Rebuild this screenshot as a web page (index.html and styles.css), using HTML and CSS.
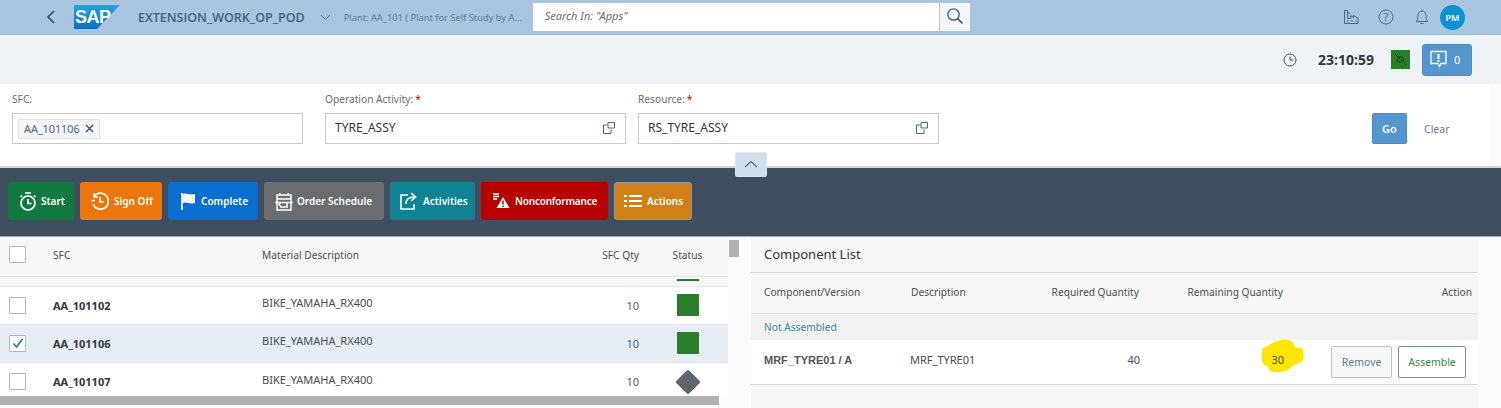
FILE: index.html
```html
<!DOCTYPE html>
<html lang="en">
  <head>
    <meta charset="UTF-8" />
    <title>EXTENSION_WORK_OP_POD</title>
    <link rel="stylesheet" href="styles.css">
  </head>
  <body>
    <header class="shell-bar">
      <svg class="back-icon" width="10" height="14" viewBox="0 0 10 14"><path d="M8 1L2 7l6 6" fill="none" stroke="#34506e" stroke-width="1.7"/></svg>
      <svg class="sap-logo" width="46" height="24" viewBox="0 0 46 24">
        <defs>
          <linearGradient id="sapBlue" x1="0" y1="0" x2="0" y2="1">
            <stop offset="0" stop-color="#1fa5e6"/>
            <stop offset="1" stop-color="#0a6fc0"/>
          </linearGradient>
        </defs>
        <polygon points="0,0 46,0 23,24 0,24" fill="url(#sapBlue)"/>
        <text x="1" y="18" class="sap-text">SAP</text>
      </svg>
      <span class="app-title">EXTENSION_WORK_OP_POD</span>
      <svg class="title-caret" width="11" height="7" viewBox="0 0 11 7"><path d="M1 1l4.5 4.5L10 1" fill="none" stroke="#5a7691" stroke-width="1"/></svg>
      <span class="plant">Plant: AA_101 ( Plant for Self Study by A...</span>
      <div class="search">
        <div class="search-input">Search In: "Apps"</div>
        <button class="search-btn">
          <svg width="18" height="18" viewBox="0 0 18 18"><circle cx="7.5" cy="7.5" r="5.7" fill="none" stroke="#2f5d86" stroke-width="1.3"/><path d="M11.7 11.7L16.5 16.5" stroke="#2f5d86" stroke-width="1.7"/></svg>
        </button>
      </div>
      <div class="shell-icons">
        <svg class="icon-plant" width="16" height="14" viewBox="0 0 16 14" fill="none" stroke="#4d6a86" stroke-width="1"><path d="M1.5 .5h3v8h3V5.5l3 2V5.5l4.5 2.500v5.5H1.5zM4.500 3H7M4 11h2M8 11h2M12 11h1.5"/></svg>
        <svg class="icon-help" width="16" height="16" viewBox="0 0 16 16"><circle cx="8" cy="8" r="7" fill="none" stroke="#4d6a86" stroke-width="1"/><text x="8" y="12" class="help-text">?</text></svg>
        <svg class="icon-bell" width="14" height="16" viewBox="0 0 14 16" fill="none" stroke="#4d6a86" stroke-width="1"><path d="M1 12.5c1.5-1 1.800-2.500 1.800-5C2.800 4 4.500 2 7 2s4.200 2 4.200 5.500c0 2.500.3 4 1.800 5zM7 .5V2M5.500 14.500h3"/></svg>
        <div class="avatar">PM</div>
      </div>
    </header>

    <div class="status-bar">
      <svg class="clock" width="14" height="14" viewBox="0 0 14 14" fill="none" stroke="#3d4a56" stroke-width="1"><circle cx="7" cy="7" r="6"/><path d="M7 3.5V7h3.5"/></svg>
      <span class="time">23:10:59</span>
      <div class="conn-status">
        <svg width="13" height="13" viewBox="0 0 13 13" fill="none" stroke="#1d3d1d" stroke-width="1"><circle cx="6.5" cy="6.5" r="3"/><path d="M1 1l11 11"/></svg>
      </div>
      <button class="msg-btn">
        <svg width="19" height="19" viewBox="0 0 19 19"><path d="M2 1.5h15v12h-5l-1.5 3-1.5-3H2z" fill="none" stroke="#fff" stroke-width="1.3"/><path d="M9.5 4v5M9.5 10v1.800" stroke="#fff" stroke-width="2"/></svg>
        <span>0</span>
      </button>
    </div>

    <section class="filter-bar">
      <div class="field field-sfc">
        <label>SFC:</label>
        <div class="input">
          <span class="token">AA_101106 <svg width="9" height="9" viewBox="0 0 9 9"><path d="M1 1l7 7M8 1L1 8" stroke="#34506e" stroke-width="1.4"/></svg></span>
        </div>
      </div>
      <div class="field field-op">
        <label>Operation Activity:<b>*</b></label>
        <div class="input input-text">
          TYRE_ASSY
          <svg class="vh-icon" width="12" height="12" viewBox="0 0 12 12" fill="none" stroke="#3f6c96" stroke-width="1"><path d="M4.5 3H.5v8.5H8V7.5M5 .5h6.5V6H5z"/></svg>
        </div>
      </div>
      <div class="field field-res">
        <label>Resource:<b>*</b></label>
        <div class="input input-text">
          RS_TYRE_ASSY
          <svg class="vh-icon" width="12" height="12" viewBox="0 0 12 12" fill="none" stroke="#3f6c96" stroke-width="1"><path d="M4.5 3H.5v8.5H8V7.5M5 .5h6.5V6H5z"/></svg>
        </div>
      </div>
      <button class="go-btn">Go</button>
      <button class="clear-btn">Clear</button>
      <button class="collapse-btn">
        <svg width="14" height="8" viewBox="0 0 14 8"><path d="M1 7l6-5.5L13 7" fill="none" stroke="#3f6c96" stroke-width="1.1"/></svg>
      </button>
    </section>

    <nav class="toolbar">
      <button class="action action-start">
        <svg width="18" height="19" viewBox="0 0 18 19" fill="none" stroke="#fff" stroke-width="1.7"><circle cx="9" cy="11" r="7"/><path d="M9 7v4.5h3.5M6 1h6M3 3.500l-1.5 1.500M15 3.500l1.5 1.500"/></svg>
        Start
      </button>
      <button class="action action-signoff">
        <svg width="19" height="18" viewBox="0 0 19 18" fill="none" stroke="#fff" stroke-width="1.7"><path d="M4 4.5A8 8 0 1 1 3 12M1.5 8.5h3.5M4 1v4h4M10 5v5h3.5"/></svg>
        Sign Off
      </button>
      <button class="action action-complete">
        <svg width="16" height="19" viewBox="0 0 16 19"><path d="M2 1v17" stroke="#fff" stroke-width="1.7"/><path d="M3 2c4-1.5 6 1.5 12 0v9c-5 1.5-8-1.5-12 0z" fill="#fff"/></svg>
        Complete
      </button>
      <button class="action action-schedule">
        <svg width="18" height="19" viewBox="0 0 18 19" fill="none" stroke="#fff" stroke-width="1.5"><path d="M2 3h14v15H2zM5 1v3M13 1v3M2 7h14M0 10.5h18M6 10.5l-2 2 2 2M12 10.5v4M5 15h8"/></svg>
        Order Schedule
      </button>
      <button class="action action-activities">
        <svg width="18" height="18" viewBox="0 0 18 18" fill="none" stroke="#fff" stroke-width="1.6"><path d="M8 3H1v14h13v-5M6 12c0-5 3-7 8-7M11 1l4.5 4-4.5 4"/></svg>
        Activities
      </button>
      <button class="action action-nc">
        <svg width="17" height="16" viewBox="0 0 17 16"><path d="M0 1h6M0 3.5h6M0 6h4" stroke="#fff" stroke-width="1.4"/><path d="M10 4l6.5 11h-13z" fill="#fff"/><path d="M10 7.5v4M10 12.5v1.5" stroke="#b80000" stroke-width="1.5"/></svg>
        Nonconformance
      </button>
      <button class="action action-more">
        <svg width="18" height="14" viewBox="0 0 18 14" fill="none" stroke="#fff" stroke-width="2"><path d="M0 2h3M5 2h13M0 7h3M5 7h13M0 12h3M5 12h13"/></svg>
        Actions
      </button>
    </nav>

    <main class="content">
      <div class="list-pane">
        <table class="sfc-table">
          <thead>
            <tr>
              <th class="col-check"><span class="checkbox"></span></th>
              <th class="col-sfc">SFC</th>
              <th class="col-material">Material Description</th>
              <th class="col-qty">SFC Qty</th>
              <th class="col-status">Status</th>
            </tr>
          </thead>
          <tbody>
            <tr class="row-cut">
              <td colspan="4"></td>
              <td class="col-status"><span class="status-sliver"></span></td>
            </tr>
            <tr>
              <td class="col-check"><span class="checkbox"></span></td>
              <td class="col-sfc">AA_101102</td>
              <td class="col-material">BIKE_YAMAHA_RX400</td>
              <td class="col-qty">10</td>
              <td class="col-status"><span class="status-active"></span></td>
            </tr>
            <tr class="row-selected">
              <td class="col-check">
                <span class="checkbox">
                  <svg width="12" height="11" viewBox="0 0 12 11"><path d="M1.5 5.5L4.5 9l6-8" fill="none" stroke="#2f6fae" stroke-width="1.6"/></svg>
                </span>
              </td>
              <td class="col-sfc">AA_101106</td>
              <td class="col-material">BIKE_YAMAHA_RX400</td>
              <td class="col-qty">10</td>
              <td class="col-status"><span class="status-active"></span></td>
            </tr>
            <tr class="row-last">
              <td class="col-check"><span class="checkbox"></span></td>
              <td class="col-sfc">AA_101107</td>
              <td class="col-material">BIKE_YAMAHA_RX400</td>
              <td class="col-qty">10</td>
              <td class="col-status"><span class="status-new"></span></td>
            </tr>
          </tbody>
        </table>
        <div class="h-scroll"></div>
      </div>
      <div class="v-scroll"><div class="v-thumb"></div></div>

      <div class="component-pane">
        <h2>Component List</h2>
        <table class="component-table">
          <thead>
            <tr>
              <th class="c-comp">Component/Version</th>
              <th class="c-desc">Description</th>
              <th class="c-req">Required Quantity</th>
              <th class="c-rem">Remaining Quantity</th>
              <th class="c-action">Action</th>
            </tr>
          </thead>
          <tbody>
            <tr class="group-row"><td colspan="5">Not Assembled</td></tr>
            <tr class="item-row">
              <td class="c-comp"><strong>MRF_TYRE01 / A</strong></td>
              <td class="c-desc">MRF_TYRE01</td>
              <td class="c-req">40</td>
              <td class="c-rem">
                <span class="remaining">
                  <svg class="highlight" width="44" height="35" viewBox="0 0 44 35"><path d="M3 9C9 7 13 2 22 1c6-1 10 0 12 4l1 4c4-1 8 0 8 2 1 5 1 9-1 12-6 2-11 4-14 8-6 3-14 3-18 1-1-3-2-5-6-6-3-5-3-12-1-17z" fill="#ffe600"/></svg>
                  <span class="remaining-num">30</span>
                </span>
              </td>
              <td class="c-action">
                <button class="remove-btn">Remove</button>
                <button class="assemble-btn">Assemble</button>
              </td>
            </tr>
          </tbody>
        </table>
      </div>
    </main>
  </body>
</html>
```

FILE: styles.css
```css
* {
  box-sizing: border-box;
}
html,
body {
  height: 408px;
  overflow: hidden;
}
body {
  margin: 0;
  font-family: "Noto Sans", "Open Sans", sans-serif;
  font-size: 11px;
  color: #32363a;
  background-color: #fbfbfb;
}
button {
  font-family: inherit;
  cursor: pointer;
}
svg {
  flex: none;
}

/* shell header */
.shell-bar {
  height: 35px;
  background-color: #a9c4df;
  border-bottom: 1px solid #9db9d6;
  display: flex;
  align-items: center;
}
.back-icon {
  margin-left: 46px;
}
.sap-logo {
  margin-left: 18px;
}
.sap-text {
  font-family: "Liberation Sans", sans-serif;
  font-size: 18px;
  font-weight: bold;
  fill: #fff;
  letter-spacing: -0.5px;
}
.app-title {
  margin-left: 18px;
  font-family: "Open Sans", sans-serif;
  font-size: 12.5px;
  font-weight: 600;
  color: #45607c;
}
.title-caret {
  margin-left: 15px;
}
.plant {
  margin-left: 13px;
  width: 189px;
  white-space: nowrap;
  font-size: 9.3px;
  color: #5f7a96;
}
.search {
  display: flex;
  gap: 1px;
  height: 28px;
}
.search-input {
  width: 406px;
  background-color: #fff;
  padding: 5px 12px;
  font-style: italic;
  font-size: 11px;
  color: #6a6d70;
}
.search-btn {
  width: 30px;
  padding: 2px 0 0;
  border: none;
  background-color: #f4f6f8;
}
.shell-icons {
  margin-left: auto;
  margin-right: 36px;
  display: flex;
  align-items: center;
}
.icon-help {
  margin-left: 19px;
}
.icon-bell {
  margin-left: 21px;
}
.avatar {
  margin-left: 11px;
  width: 25px;
  height: 25px;
  border-radius: 50%;
  background-color: #0a92d4;
  color: #fff;
  font-size: 9px;
  font-weight: 600;
  display: flex;
  align-items: center;
  justify-content: center;
}
.help-text {
  font-size: 11px;
  text-anchor: middle;
  fill: #4d6a86;
}

/* clock row */
.status-bar {
  height: 49px;
  background-color: #eff3f8;
  display: flex;
  align-items: center;
  justify-content: flex-end;
  padding: 0 29px 0 0;
}
.time {
  margin-left: 21px;
  font-family: "Open Sans", sans-serif;
  font-size: 14px;
  font-weight: 700;
}
.conn-status {
  margin-left: 17px;
  width: 19px;
  height: 19px;
  background-color: #2a7d2a;
  display: flex;
  align-items: center;
  justify-content: center;
}
.msg-btn {
  margin-left: 12px;
  width: 50px;
  height: 32px;
  padding: 0 0 0 6px;
  background-color: #5496cd;
  border: 1px solid #4b8cc2;
  border-radius: 3px;
  color: #fff;
  font-size: 11px;
  display: flex;
  align-items: center;
  gap: 6px;
}

/* filter bar */
.filter-bar {
  position: relative;
  height: 82px;
  width: 1490px;
  background-color: #fff;
  padding-left: 12px;
  display: flex;
}
.field label {
  display: block;
  height: 29px;
  padding-top: 8px;
  font-size: 10.2px;
  color: #6a6d70;
}
.field label b {
  color: #bb0000;
  font-weight: 400;
  margin-left: 2px;
}
.field-sfc {
  width: 291px;
}
.field-op {
  margin-left: 22px;
  width: 301px;
}
.field-res {
  margin-left: 12px;
  width: 301px;
}
.input {
  height: 31px;
  border: 1px solid #c8cbce;
  display: flex;
  align-items: center;
}
.input-text {
  padding: 0 9px 2px;
  justify-content: space-between;
  font-size: 12px;
  color: #32363a;
}
.token {
  margin-left: 5px;
  height: 20px;
  padding: 0 5px;
  background-color: #f3f5f7;
  border: 1px solid #dfe2e5;
  font-size: 10.8px;
  color: #46698c;
  display: flex;
  align-items: center;
  gap: 5px;
}
.vh-icon {
  margin-right: 1px;
}
.go-btn {
  margin: 29px 0 0 433px;
  width: 35px;
  height: 31px;
  background-color: #5496cd;
  border: 1px solid #4b8cc2;
  border-radius: 2px;
  color: #fff;
  font-size: 11px;
  font-weight: 600;
}
.clear-btn {
  margin: 29px 0 0 15px;
  height: 31px;
  padding: 0 2px;
  background: none;
  border: none;
  color: #5f7a96;
  font-size: 10.5px;
}
/* lies over the border between the filter bar and the toolbar */
.collapse-btn {
  position: absolute;
  left: 735px;
  top: 68px;
  width: 32px;
  height: 25px;
  padding: 0 0 4px;
  background-color: #cfdfee;
  border: 1px solid #dbe6f1;
  border-radius: 2px;
  z-index: 2;
}

/* action toolbar */
.toolbar {
  height: 70px;
  border-top: 2px solid #d3d6d9;
  background-color: #3f4f5f;
  padding: 14px 0 0 8px;
  display: flex;
  align-items: flex-start;
  gap: 6px;
}
.action {
  height: 38px;
  padding: 0 0 0 10px;
  border: 1px solid transparent;
  border-radius: 3px;
  color: #fff;
  font-size: 10px;
  font-weight: 600;
  display: flex;
  align-items: center;
  gap: 5px;
  white-space: nowrap;
}
.action-start {
  width: 66px;
  gap: 4px;
  background-color: #127a40;
}
.action-signoff {
  width: 82px;
  padding-left: 9px;
  background-color: #ec750d;
}
.action-complete {
  width: 90px;
  padding-left: 11px;
  background-color: #0a6ed1;
}
.action-schedule {
  width: 120px;
  gap: 4px;
  background-color: #6a6d70;
}
.action-activities {
  width: 85px;
  padding-left: 9px;
  background-color: #0e8391;
}
.action-nc {
  width: 127px;
  padding-left: 11px;
  letter-spacing: -0.2px;
  background-color: #b80000;
}
.action-more {
  width: 78px;
  padding-left: 9px;
  background-color: #d08014;
  border-color: #8a99a8;
}

/* main area */
.content {
  display: flex;
  align-items: flex-start;
  height: 172px;
  background-color: #fbfbfb;
  border-top: 1px solid #a8b0b8;
}
.list-pane {
  width: 728px;
}
.sfc-table {
  width: 728px;
  table-layout: fixed;
  border-collapse: collapse;
}
.sfc-table th {
  height: 39px;
  padding: 0 0 3px;
  background-color: #f7f7f7;
  border-bottom: 1px solid #e5e5e5;
  font-size: 10.2px;
  font-weight: 400;
  color: #4a4d50;
  text-align: left;
}
.sfc-table td {
  height: 38px;
  background-color: #fff;
  border-bottom: 1px solid #e5e5e5;
  padding: 0;
}
.col-check {
  width: 53px;
  padding-left: 9px !important;
}
.col-sfc {
  width: 209px;
}
.sfc-table td.col-sfc {
  font-weight: 700;
}
.col-material {
  width: 310px;
}
.sfc-table td.col-material {
  padding-bottom: 5px;
  color: #4a4d50;
}
.col-qty {
  width: 67px;
  text-align: right !important;
}
.sfc-table td.col-qty {
  color: #3f5f78;
}
.col-status {
  width: 89px;
  padding-left: 8px !important;
  text-align: center !important;
}
.sfc-table .row-cut td {
  height: 10px;
  background-color: #f7f7f7;
  overflow: hidden;
}
.status-sliver {
  display: block;
  width: 22px;
  height: 2px;
  margin: -2px auto 0;
  background-color: #2a7d2a;
}
.sfc-table .row-selected td {
  background-color: #e6edf5;
}
.sfc-table .row-last td {
  height: 34px;
  padding-top: 5px;
  border-bottom: none;
}
.checkbox {
  display: flex;
  align-items: center;
  justify-content: center;
  width: 17px;
  height: 17px;
  background-color: #fff;
  border: 1px solid #b4b7ba;
  border-radius: 1px;
}
.status-active {
  display: block;
  width: 22px;
  height: 22px;
  margin: 0 auto;
  background-color: #2a7d2a;
  border-radius: 1px;
}
.status-new {
  display: block;
  width: 18px;
  height: 18px;
  margin: 0 auto;
  background-color: #5b666e;
  border-radius: 2px;
  transform: rotate(45deg);
}
.h-scroll {
  width: 719px;
  height: 9px;
  background-color: #b0b0b0;
}
.v-scroll {
  width: 10px;
  margin-left: 1px;
  padding-top: 3px;
}
.v-thumb {
  width: 10px;
  height: 17px;
  background-color: #b0b0b0;
}

/* component list */
.component-pane {
  margin-left: 12px;
  width: 727px;
  height: 171px;
  background-color: #f7f7f7;
}
.component-pane h2 {
  margin: 0;
  height: 36px;
  padding: 8px 0 0 13px;
  font-size: 13px;
  font-weight: 400;
  color: #32363a;
  border-bottom: 1px solid #d9d9d9;
}
.component-table {
  width: 727px;
  table-layout: fixed;
  border-collapse: collapse;
}
.component-table th {
  height: 40px;
  padding-bottom: 3px;
  font-size: 10.2px;
  font-weight: 400;
  color: #4a4d50;
  text-align: left;
  border-bottom: 1px solid #e5e5e5;
}
.component-table td {
  padding: 0;
}
.c-comp {
  width: 159px;
  padding-left: 13px !important;
}
.c-desc {
  width: 108px;
}
.c-req {
  width: 122px;
  text-align: right !important;
}
.c-rem {
  width: 144px;
  text-align: right !important;
}
.c-action {
  width: 194px;
  padding-right: 6px !important;
  text-align: right !important;
}
.group-row td {
  height: 27px;
  padding-left: 13px !important;
  background-color: #f2f2f2;
  font-size: 10.2px;
  color: #3f8484;
}
.item-row td {
  height: 44px;
  background-color: #fff;
  border-bottom: 1px solid #d9d9d9;
  color: #4a4d50;
  padding-bottom: 4px;
}
.item-row strong {
  font-family: "Liberation Sans", sans-serif;
  color: #555;
}
.remaining {
  position: relative;
  display: inline-block;
}
.remaining-num {
  position: relative;
}
/* marker scribble drawn over the screenshot */
.highlight {
  position: absolute;
  left: -11px;
  top: -13px;
}
.item-row td.c-action {
  padding: 0 12px 0 0 !important;
}
.remove-btn,
.assemble-btn {
  height: 32px;
  font-size: 10.5px;
  border-radius: 2px;
  background-color: #f7f7f7;
  margin-left: 3px;
}
.remove-btn {
  width: 61px;
  border: 1px solid #bfbfbf;
  color: #5f7a96;
}
.assemble-btn {
  width: 68px;
  background-color: #fff;
  border: 1px solid #6ea37a;
  color: #3d8a4f;
}
```
